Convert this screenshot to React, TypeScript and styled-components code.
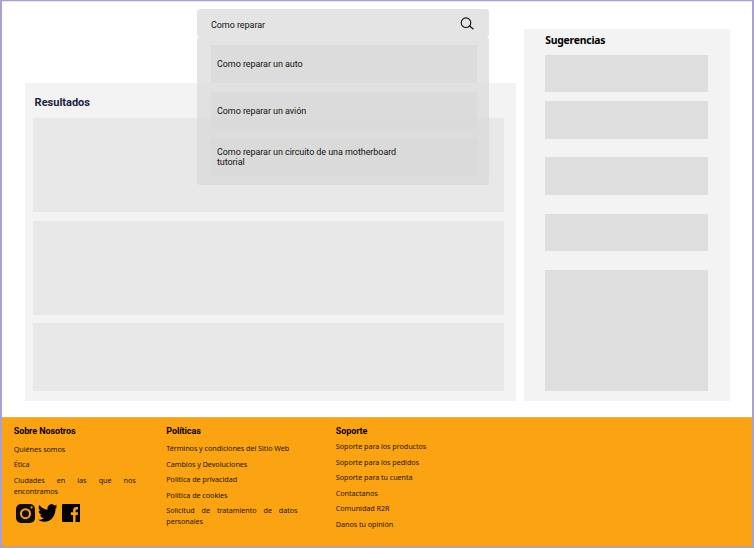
import React from "react";
import styled, { createGlobalStyle } from "styled-components";

const GlobalStyle = createGlobalStyle`
  *, *::before, *::after { box-sizing: border-box; }
  html, body { margin: 0; padding: 0; background: #fff; overflow: hidden; }
  p, h2, h3, ul { margin: 0; padding: 0; }
`;

const Page = styled.div`
  width: 754px;
  height: 548px;
  display: flex;
  flex-direction: column;
  border: 2px solid #a5a1d8;
  border-bottom-width: 1px;
  border-top-width: 1px;
  background: #fff;
  color: #111;
  font-family: Roboto, sans-serif;
`;

const Main = styled.main`
  height: 416px;
  flex: none;
  display: flex;
  align-items: flex-start;
  gap: 8px;
  padding-left: 23px;
  box-shadow: inset 0 1px #e6e4f5;
`;

const LeftColumn = styled.div`
  width: 491.4px;
  padding-top: 8px;
`;

const Search = styled.div`
  position: relative;
  width: 292px;
  height: 28px;
  margin: 0 0 46px 172px;
`;

const SearchBox = styled.div`
  height: 27.5px;
  display: flex;
  align-items: center;
  justify-content: space-between;
  padding: 4px 15px 0 14px;
  border-radius: 3px;
  background: #e4e4e4;
  font-size: 9px;
  line-height: 12px;
  svg { margin-top: -3px; }
`;

const Query = styled.span`
  letter-spacing: -0.06px;
`;

const Dropdown = styled.div`
  position: absolute;
  top: 27.5px;
  left: 0;
  width: 100%;
  height: 148.5px;
  display: flex;
  flex-direction: column;
  gap: 8.7px;
  padding: 8.7px 12px 0 14px;
  border-radius: 3px;
  background: rgba(217, 217, 217, 0.7);
`;

const Suggestion = styled.div`
  height: 37.7px;
  display: flex;
  align-items: center;
  padding: 1px 70px 0 6px;
  background: rgba(217, 217, 217, 0.8);
  font-size: 9px;
  line-height: 10.5px;
  letter-spacing: -0.07px;
`;

const Results = styled.section`
  height: 318px;
  padding: 13px 12px 0 8px;
  background: #f3f3f3;
`;

const ResultsTitle = styled.h2`
  height: 22px;
  padding-left: 1.6px;
  color: #18243f;
  font-size: 11px;
  line-height: 14px;
  font-weight: 700;
`;

const ResultCard = styled.div<{ $height: number }>`
  height: ${(p) => p.$height}px;
  margin-bottom: 8.6px;
  background: #e8e8e8;
`;

const Sidebar = styled.aside`
  width: 205.5px;
  height: 372px;
  margin-top: 28px;
  padding: 3px 22px 0 20.8px;
  background: #f3f3f3;
`;

const SidebarTitle = styled.h2`
  height: 22.5px;
  color: #000;
  font-family: "Noto Sans", sans-serif;
  font-size: 10.4px;
  line-height: 17px;
  font-weight: 700;
  letter-spacing: -0.22px;
`;

const SideCard = styled.div<{ $height: number; $gap: number }>`
  height: ${(p) => p.$height}px;
  margin-bottom: ${(p) => p.$gap}px;
  background: #dedede;
`;

const Footer = styled.footer`
  flex: 1;
  display: flex;
  padding: 8px 0 0 11.7px;
  border-top: 1px solid #f1b13f;
  border-bottom: 1px solid #d6a15d;
  background: #fca311;
`;

const FooterColumn = styled.section<{ $width: number; $text: number }>`
  width: ${(p) => p.$width}px;
  flex: none;
  ul { width: ${(p) => p.$text}px; list-style: none; }
`;

const FooterTitle = styled.h3<{ $gap: number }>`
  margin-bottom: ${(p) => p.$gap}px;
  color: #000;
  font-size: 9px;
  line-height: 10px;
  font-weight: 700;
  letter-spacing: -0.09px;
`;

const FooterLink = styled.li`
  margin-bottom: 4.5px;
  color: #1b1608;
  font-family: "Noto Sans", sans-serif;
  font-size: 7.2px;
  line-height: 11px;
  letter-spacing: -0.04px;
  text-align: justify;
`;

const Socials = styled.div`
  display: flex;
  align-items: center;
  height: 22px;
  padding: 2.5px 0 0 2.8px;
  svg { flex: none; }
  svg + svg { margin-left: 2.4px; }
  svg:last-child { margin-left: 4.4px; }
`;

const SearchIcon = () => (
  <svg width="14" height="13" viewBox="0 0 14 13" fill="none" stroke="#111">
    <circle cx="6" cy="5.7" r="4.8" strokeWidth="1.1" />
    <path d="M9.5 9 13 11.8" strokeWidth="1.3" strokeLinecap="round" />
  </svg>
);

const InstagramIcon = () => (
  <svg width="19" height="19" viewBox="0 0 19 19">
    <rect width="19" height="19" rx="5" fill="#100d05" />
    <circle cx="9.5" cy="9.7" r="4.5" fill="none" stroke="#fca311" strokeWidth="2" />
    <circle cx="15.6" cy="3.4" r="1.1" fill="#fca311" />
  </svg>
);

const TwitterIcon = () => (
  <svg width="19.5" height="18" viewBox="0 2 24 20" preserveAspectRatio="none" fill="#000">
    <path d="M23.95 4.57a10 10 0 0 1-2.82.77 4.96 4.96 0 0 0 2.16-2.72c-.95.55-2 .96-3.13 1.18a4.92 4.92 0 0 0-8.38 4.48C7.69 8.1 4.07 6.13 1.64 3.16a4.93 4.93 0 0 0 1.52 6.57 4.9 4.9 0 0 1-2.23-.61v.06a4.92 4.92 0 0 0 3.95 4.83 5 5 0 0 1-2.21.08 4.94 4.94 0 0 0 4.6 3.42A9.87 9.87 0 0 1 0 19.54a14 14 0 0 0 7.55 2.21c9.05 0 14-7.5 14-13.98l-.02-.64a9.9 9.9 0 0 0 2.42-2.56z" />
  </svg>
);

const FacebookIcon = () => (
  <svg width="18.5" height="18" viewBox="0 0 18 18" preserveAspectRatio="none">
    <rect width="18" height="18" rx="1" fill="#000" />
    <path d="M10.8 18v-7H8.6V8.2h2.2V6.3c0-2.2 1.3-3.4 3.2-3.4l1.6.1v2.4h-1.1c-1.1 0-1.3.6-1.3 1.3v1.5h2.4l-.3 2.8h-2.1v7z" fill="#fca311" />
  </svg>
);

const suggestions = [
  "Como reparar un auto",
  "Como reparar un avión",
  "Como reparar un circuito de una motherboard tutorial",
];

const resultHeights = [94, 94, 67.5];

const sideCards = [
  { height: 37.5, gap: 9 },
  { height: 37.5, gap: 18.7 },
  { height: 37.7, gap: 18.7 },
  { height: 37.7, gap: 18.7 },
  { height: 121, gap: 0 },
];

const footerColumns = [
  {
    title: "Sobre Nosotros",
    width: 152.6,
    text: 122,
    gap: 7.5,
    links: ["Quiénes somos", "Ética", "Ciudades en las que nos encontramos"],
    social: true,
  },
  {
    title: "Políticas",
    width: 169.5,
    text: 131.2,
    gap: 7,
    links: [
      "Términos y condiciones del Sitio Web",
      "Cambios y Devoluciones",
      "Política de privacidad",
      "Política de cookies",
      "Solicitud de tratamiento de datos personales",
    ],
  },
  {
    title: "Soporte",
    width: 130,
    text: 122,
    gap: 5.4,
    links: [
      "Soporte para los productos",
      "Soporte para los pedidos",
      "Soporte para tu cuenta",
      "Contactanos",
      "Comunidad R2R",
      "Danos tu opinión",
    ],
  },
];

export default function App() {
  return (
    <>
      <GlobalStyle />
      <Page>
        <Main>
          <LeftColumn>
            <Search>
              <SearchBox>
                <Query>Como reparar</Query>
                <SearchIcon />
              </SearchBox>
              <Dropdown>
                {suggestions.map((text) => (
                  <Suggestion key={text}>{text}</Suggestion>
                ))}
              </Dropdown>
            </Search>
            <Results>
              <ResultsTitle>Resultados</ResultsTitle>
              {resultHeights.map((height, i) => (
                <ResultCard key={i} $height={height} />
              ))}
            </Results>
          </LeftColumn>
          <Sidebar>
            <SidebarTitle>Sugerencias</SidebarTitle>
            {sideCards.map((card, i) => (
              <SideCard key={i} $height={card.height} $gap={card.gap} />
            ))}
          </Sidebar>
        </Main>
        <Footer>
          {footerColumns.map((column) => (
            <FooterColumn key={column.title} $width={column.width} $text={column.text}>
              <FooterTitle $gap={column.gap}>{column.title}</FooterTitle>
              <ul>
                {column.links.map((link) => (
                  <FooterLink key={link}>{link}</FooterLink>
                ))}
              </ul>
              {column.social && (
                <Socials>
                  <InstagramIcon />
                  <TwitterIcon />
                  <FacebookIcon />
                </Socials>
              )}
            </FooterColumn>
          ))}
        </Footer>
      </Page>
    </>
  );
}
